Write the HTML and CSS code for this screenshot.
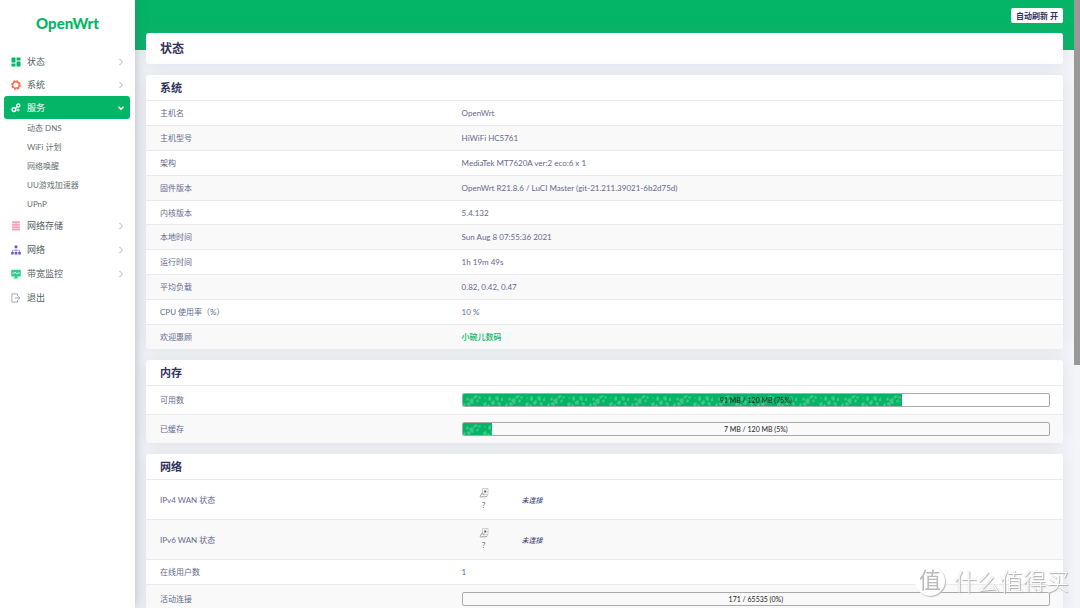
FILE: index.html
```html
<!DOCTYPE html>
<html lang="zh-CN">
<head>
<meta charset="utf-8">
<title>OpenWrt - 状态</title>
<link rel="stylesheet" href="styles.css">
</head>
<body>
<svg class="defs" aria-hidden="true">
  <defs>
    <pattern id="speckle" width="42" height="14" patternUnits="userSpaceOnUse">
      <rect width="42" height="14" fill="#05b567"/>
      <g fill="#5fd39c" opacity=".6">
        <path d="M3 5l2-2 1 2-2 2zM6 6l3-2 2 2-1 2 1 1-2 1-2-2zM4 9l2-1 2 2-1 2-3-1zM10 3l3-2 2 1-2 2-2 1zM13 7l2-2 1 2-2 2zM16 2l2 1-1 2-2-1zM1 9l2 1-1 3-2-1z"/>
        <path d="M20 10l2-2 2 1-1 3-2 1zM25 5l1-3 2 1 0 3-2 1zM28 8l3-2 1 2-1 3-3-1zM32 3l3-1 1 3-1 2-2-1zM34 9l3-1 1 3-2 1zM24 11l2-1 1 2-2 1zM38 5l2-2 0 4-2 0zM21 4l1-1 1 1-1 1z"/>
      </g>
    </pattern>
    <symbol id="chevron" viewBox="0 0 6 8"><path d="M1.500 1L4.500 4L1.500 7" fill="none" stroke="currentColor" stroke-width="1"/></symbol>
    <symbol id="port" viewBox="0 0 10 10">
      <path d="M3.500.6h5.500v5.800H3.500z" fill="#fff" stroke="#b5b5b5" stroke-width=".7"/>
      <path d="M5.300 2.500h2v2h-2z" fill="#555"/>
      <path d="M.8 8.300L3.300 5l2.200 2.300M1 8.800h6l1.700-1.200" fill="none" stroke="#8a8a8a" stroke-width=".8"/>
    </symbol>
  </defs>
</svg>

<div class="shell">
  <aside class="sidebar">
    <a class="brand" href="#">OpenWrt</a>
    <nav>
      <ul class="menu">
        <li class="menu-item"><a class="menu-link" href="#">
          <svg class="menu-icon" viewBox="0 0 10 10"><path d="M.5.5h4v5h-4zM.5 6.500h4v3h-4zM5.500.5h4v3h-4zM5.500 4.500h4v5h-4z" fill="#05b567"/></svg>
          <span>状态</span><svg class="arrow"><use href="#chevron"/></svg></a></li>
        <li class="menu-item"><a class="menu-link" href="#">
          <svg class="menu-icon" viewBox="0 0 10 10"><circle cx="5" cy="5" r="4" fill="none" stroke="#fb6340" stroke-width="1.600" stroke-dasharray="1.800 1.340"/><circle cx="5" cy="5" r="3.200" fill="none" stroke="#fb6340" stroke-width="1.200"/></svg>
          <span>系统</span><svg class="arrow"><use href="#chevron"/></svg></a></li>
        <li class="menu-item open"><a class="menu-link active" href="#">
          <svg class="menu-icon" viewBox="0 0 10 10" fill="none" stroke="#fff"><circle cx="3" cy="6.600" r="1.900" stroke-width="1.500"/><circle cx="7.300" cy="2.500" r="1.600" stroke-width="1.200"/><circle cx="7.300" cy="7" r=".9" stroke-width=".9"/><path d="M4.400 5.200L6.400 3.600" stroke-width="1.200"/></svg>
          <span>服务</span><svg class="arrow arrow-down" viewBox="0 0 8 8"><path d="M1.500 2.800L4 5.200L6.500 2.800" fill="none" stroke="#fff" stroke-width="1.500"/></svg></a>
          <ul class="submenu">
            <li><a href="#">动态 DNS</a></li>
            <li><a href="#">WiFi 计划</a></li>
            <li><a href="#">网络唤醒</a></li>
            <li><a href="#">UU游戏加速器</a></li>
            <li><a href="#">UPnP</a></li>
          </ul></li>
        <li class="menu-item"><a class="menu-link" href="#">
          <svg class="menu-icon" viewBox="0 0 10 10" fill="#f5a3b5"><rect x="1" y=".3" width="8" height="2" rx=".9"/><rect x="1" y="2.800" width="8" height="1.900" rx=".6"/><rect x="1" y="5.200" width="8" height="1.900" rx=".6"/><rect x="1" y="7.600" width="8" height="2" rx=".9"/></svg>
          <span>网络存储</span><svg class="arrow"><use href="#chevron"/></svg></a></li>
        <li class="menu-item"><a class="menu-link" href="#">
          <svg class="menu-icon" viewBox="0 0 10 10"><path d="M3.700.5h2.600v2.600H3.700zM.2 7h2.500v2.500H.2zM3.750 7h2.500v2.500h-2.500zM7.300 7h2.500v2.500H7.300z" fill="#6a4be0"/><path d="M5 3v4M1.500 7V5.200h7V7" fill="none" stroke="#8f7be8" stroke-width=".7"/></svg>
          <span>网络</span><svg class="arrow"><use href="#chevron"/></svg></a></li>
        <li class="menu-item"><a class="menu-link" href="#">
          <svg class="menu-icon" viewBox="0 0 10 10"><path d="M1 .8h8q.8 0 .8.800v5q0 .8-.8.800H6.200v1h1.300v1h-5v-1h1.300v-1H1q-.8 0-.8-.8v-5q0-.8.8-.8z" fill="#2dce89"/><path d="M1.500 4.200h1.700l1-1.200 1.500 2 .8-.9h2" fill="none" stroke="#fff" stroke-width=".9"/></svg>
          <span>带宽监控</span><svg class="arrow"><use href="#chevron"/></svg></a></li>
        <li class="menu-item"><a class="menu-link" href="#">
          <svg class="menu-icon" viewBox="0 0 10 10" fill="none" stroke="#8b94a3" stroke-width=".8"><path d="M6.500 3V.9H.9v8.200h5.600V7"/><path d="M3.800 5h5M7.200 3.300L9 5 7.200 6.700"/></svg>
          <span>退出</span></a></li>
      </ul>
    </nav>
  </aside>

  <main class="main">
    <header class="topbar"><button class="refresh" type="button">自动刷新 开</button></header>
    <div class="content">
      <section class="card"><h1>状态</h1></section>

      <section class="card">
        <h2>系统</h2>
        <table>
          <tr><th scope="row">主机名</th><td>OpenWrt</td></tr>
          <tr><th scope="row">主机型号</th><td>HiWiFi HC5761</td></tr>
          <tr><th scope="row">架构</th><td>MediaTek MT7620A ver:2 eco:6 x 1</td></tr>
          <tr><th scope="row">固件版本</th><td>OpenWrt R21.8.6 / LuCI Master (git-21.211.39021-6b2d75d)</td></tr>
          <tr><th scope="row">内核版本</th><td>5.4.132</td></tr>
          <tr><th scope="row">本地时间</th><td>Sun Aug 8 07:55:36 2021</td></tr>
          <tr><th scope="row">运行时间</th><td>1h 19m 49s</td></tr>
          <tr><th scope="row">平均负载</th><td>0.82, 0.42, 0.47</td></tr>
          <tr><th scope="row">CPU 使用率（%）</th><td>10 %</td></tr>
          <tr><th scope="row">欢迎惠顾</th><td><a class="shop" href="#">小碗儿数码</a></td></tr>
        </table>
      </section>

      <section class="card">
        <h2>内存</h2>
        <table>
          <tr><th scope="row">可用数</th><td><div class="meter" role="progressbar" aria-label="可用数" aria-valuenow="75"><svg class="meter-fill" style="width:75%"><rect width="100%" height="100%" fill="url(#speckle)"/></svg><span>91 MB / 120 MB (75%)</span></div></td></tr>
          <tr><th scope="row">已缓存</th><td><div class="meter" role="progressbar" aria-label="已缓存" aria-valuenow="5"><svg class="meter-fill" style="width:5%"><rect width="100%" height="100%" fill="url(#speckle)"/></svg><span>7 MB / 120 MB (5%)</span></div></td></tr>
        </table>
      </section>

      <section class="card">
        <h2>网络</h2>
        <table>
          <tr><th scope="row">IPv4 WAN 状态</th><td><div class="wan"><div class="wan-port"><svg><use href="#port"/></svg><span>?</span></div><em>未连接</em></div></td></tr>
          <tr><th scope="row">IPv6 WAN 状态</th><td><div class="wan"><div class="wan-port"><svg><use href="#port"/></svg><span>?</span></div><em>未连接</em></div></td></tr>
          <tr><th scope="row">在线用户数</th><td>1</td></tr>
          <tr><th scope="row">活动连接</th><td><div class="meter" role="progressbar" aria-label="活动连接" aria-valuenow="0"><span>171 / 65535 (0%)</span></div></td></tr>
        </table>
      </section>
    </div>
  </main>
  <div class="scroll-track"><div class="scroll-thumb"></div></div>
</div>

<div class="watermark"><span class="watermark-badge">值</span><span>什么值得买</span></div>
</body>
</html>
```

FILE: styles.css
```css
:root {
  --green: #05b567;
  --line: #e9ebee;
  --text: #64698c;
  --heading: #32325d;
}

* { box-sizing: border-box; }

body {
  margin: 0;
  height: 100vh;
  overflow: hidden;
  background: #f4f5f9;
  color: var(--text);
  font: 8px/12px Lato, "Noto Sans CJK SC", sans-serif;
}

a { color: inherit; text-decoration: none; }
ul { list-style: none; margin: 0; padding: 0; }
.defs { position: absolute; width: 0; height: 0; }

.shell { display: flex; height: 100%; }

.sidebar {
  flex: none;
  width: 135px;
  background: #fff;
  box-shadow: 0 0 12px rgba(80, 90, 110, .4);
  z-index: 1;
}

.brand {
  display: block;
  padding: 11px 0 15px;
  color: var(--green);
  font-size: 15px;
  font-weight: 900;
  line-height: 24px;
  text-align: center;
}

.menu { padding: 0 5px 0 4px; }
.menu-item.open ~ .menu-item + .menu-item { margin-top: 1px; }

.menu-link {
  display: flex;
  align-items: center;
  height: 23px;
  padding: 0 6px 0 7px;
  border-radius: 3px;
  color: #525f5f;
  font-size: 9px;
}
.menu-link.active { padding-right: 5px; background: var(--green); color: #fff; }
.menu-icon { width: 10px; height: 10px; margin-right: 6px; }
.arrow { width: 6px; height: 8px; margin-left: auto; color: #a9b0bf; }
.arrow-down { width: 8px; }

.submenu a {
  display: block;
  padding-left: 23px;
  color: #666f6f;
  line-height: 19px;
}

.main {
  flex: 1;
  min-width: 0;
  overflow: hidden;
}

.topbar {
  display: flex;
  justify-content: flex-end;
  align-items: flex-start;
  height: 50px;
  padding: 8px 11px;
  background: var(--green);
}

.refresh {
  height: 15px;
  padding: 0 5px;
  border: 0;
  border-radius: 2px;
  background: #fff;
  color: var(--heading);
  font: inherit;
  font-weight: 700;
}

.content {
  display: flex;
  flex-direction: column;
  gap: 11px;
  margin-top: -17px;
  padding: 0 11px;
}

.card {
  overflow: hidden;
  border-radius: 3px;
  background: #fff;
  box-shadow: 0 0 16px rgba(120, 136, 155, .18);
}

h1, h2 {
  margin: 0;
  padding: 0 14px;
  color: var(--heading);
  font-weight: 700;
}
h1 { font-size: 12px; line-height: 31px; }
h2 { border-bottom: 1px solid var(--line); font-size: 11px; line-height: 25px; }

table {
  width: 100%;
  border-collapse: separate;
  border-spacing: 0;
  table-layout: fixed;
}
th, td {
  padding: 6px 13px;
  border-bottom: 1px solid var(--line);
  font-weight: 400;
  text-align: left;
  vertical-align: middle;
}
th { width: 33%; padding-left: 14px; }
tr:nth-child(even) { background: #f9f9f9; }
tr:nth-child(5) > * { padding-bottom: 5px; }
tr:last-child > * { border-bottom: 0; }

.shop { color: var(--green); font-weight: 500; }

.meter {
  position: relative;
  height: 14px;
  margin: 1px 0;
  border: 1px solid #aaa;
  border-radius: 2px;
  overflow: hidden;
  color: #222;
  font-size: 7px;
  line-height: 13px;
  text-align: center;
}
.meter-fill {
  position: absolute;
  top: 0;
  left: 0;
  height: 100%;
}
.meter span { position: relative; }

.wan { display: flex; align-items: center; gap: 16px; }
.wan-port {
  display: flex;
  flex-direction: column;
  align-items: center;
  width: 44px;
  padding: 2px 0 1px;
}
.wan-port svg { width: 10px; height: 10px; }
.wan-port span { line-height: 14px; }
.wan em { color: #454b78; font-size: 7px; font-weight: 500; }

.scroll-track { flex: none; width: 6px; background: #f4f5f9; }
.scroll-thumb { height: 60%; background: #999; }

.watermark {
  position: fixed;
  right: 11px;
  bottom: 10px;
  display: flex;
  align-items: center;
  gap: 9px;
  color: #fff;
  font-size: 23px;
  font-weight: 300;
  line-height: 34px;
  text-shadow: 1px 1px 1px #aaa, 0 0 1px #bbb;
  z-index: 2;
}
.watermark-badge {
  width: 30px;
  height: 30px;
  border-radius: 50%;
  background: #fff;
  box-shadow: 1px 1px 1px #bbb;
  color: #bbb;
  font-size: 22px;
  font-weight: 400;
  line-height: 28px;
  text-align: center;
  text-shadow: none;
}
```
